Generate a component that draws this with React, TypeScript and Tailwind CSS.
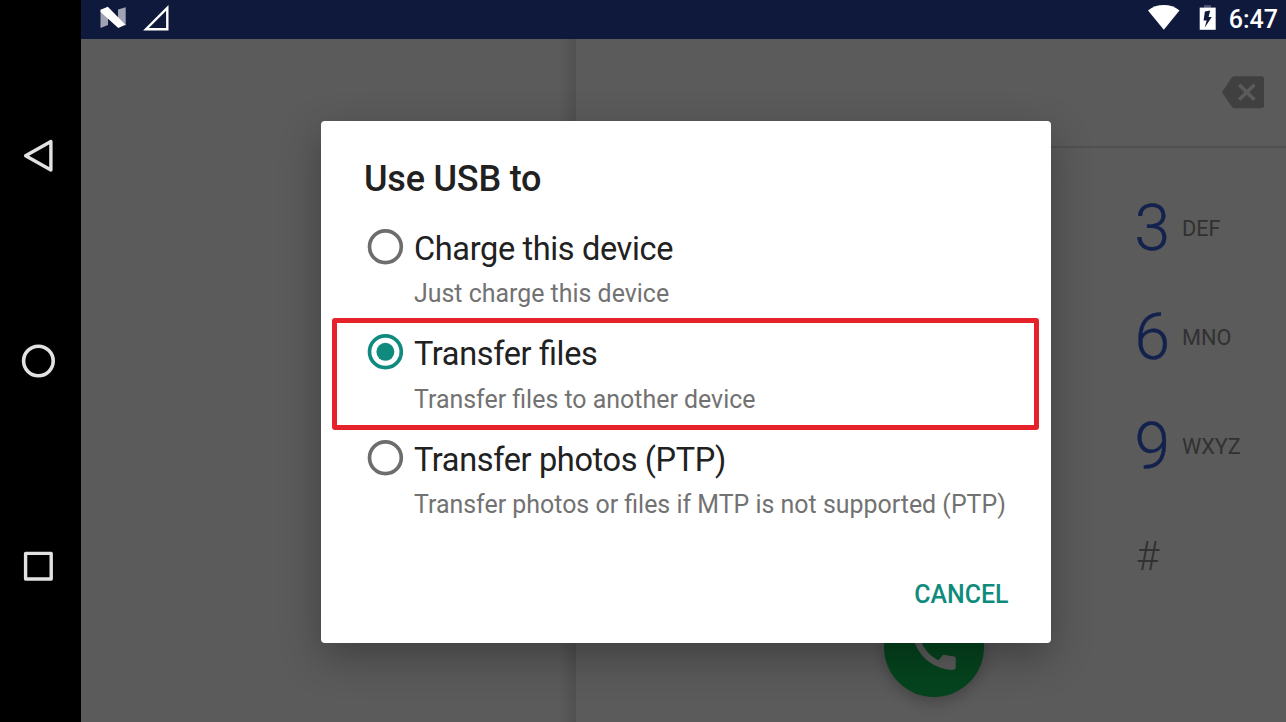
import React from "react";

const options = [
  { title: "Charge this device", detail: "Just charge this device", checked: false },
  { title: "Transfer files", detail: "Transfer files to another device", checked: true },
  {
    title: "Transfer photos (PTP)",
    detail: "Transfer photos or files if MTP is not supported (PTP)",
    checked: false,
  },
];

const keys = [
  { digit: "3", letters: "DEF" },
  { digit: "6", letters: "MNO" },
  { digit: "9", letters: "WXYZ" },
];

function NavigationBar() {
  return (
    <nav className="flex w-[81px] shrink-0 flex-col justify-center bg-black pr-[5px]">
      <button className="flex h-[205px] items-center justify-center" aria-label="Back">
        <svg width="40" height="40" viewBox="0 0 40 40" fill="none" stroke="#e2e2e2" strokeWidth="3.4" strokeLinejoin="round">
          <path d="M32.9 5.5V34L7.6 19.8Z" />
        </svg>
      </button>
      <button className="flex h-[205px] items-center justify-center" aria-label="Home">
        <svg width="40" height="40" viewBox="0 0 40 40" fill="none" stroke="#e2e2e2" strokeWidth="3.6">
          <circle cx="20.4" cy="20" r="14.8" />
        </svg>
      </button>
      <button className="flex h-[205px] items-center justify-center" aria-label="Recents">
        <svg width="40" height="40" viewBox="0 0 40 40" fill="none" stroke="#e2e2e2" strokeWidth="3.4" strokeLinejoin="round">
          <rect x="7.6" y="7.4" width="25.6" height="25.6" />
        </svg>
      </button>
    </nav>
  );
}

function StatusBar() {
  return (
    <header className="flex h-[39px] shrink-0 items-center justify-between bg-[#0e193c] pl-[18px] pr-[8px] text-white">
      <div className="flex h-full items-center">
        <svg width="80" height="39" viewBox="99 0 80 39">
          <path d="M100.5 9.5 108 12V25L100.5 28Z M118 9.5 125.7 7.3V25.5L118 23Z" fill="#9fa3b4" />
          <path d="M100.6 9.7 107.8 6.8 125.5 24.8 118.3 28 100.6 12Z" fill="#fff" />
          <path d="M167.3 8V29.2H146Z" fill="none" stroke="#fff" strokeWidth="2.4" />
        </svg>
      </div>
      <div className="flex h-full items-center">
        <svg width="82" height="39" viewBox="1147 0 82 39">
          <path d="M1163.8 29.8 1148 10.4C1152.5 6.8 1158 5 1163.8 5S1175 6.8 1179.5 10.4Z" fill="#fff" />
          <path d="M1204 5H1211V8H1204Z" fill="#4a5270" />
          <path d="M1199.7 7.6H1215.7V29.8H1199.7Z" fill="#fff" />
          <path d="M1210.2 10.5 1204.9 11.5 1203.6 20.5H1206.6L1204.8 27.5 1211.8 17H1208.6Z" fill="#0e193c" />
        </svg>
        <span className="text-[25px] font-medium leading-[39px]">6:47</span>
      </div>
    </header>
  );
}

function Dialer() {
  return (
    <main className="flex min-h-0 flex-1 bg-[#5b5b5b]">
      <section className="flex w-[495px] justify-end">
        <div className="w-[17px] bg-linear-to-r from-[#5b5b5b] to-[#505050]" />
      </section>
      <section className="relative flex flex-1 flex-col">
        <div className="flex h-[109px] items-center justify-end border-b-2 border-[#515151] pr-[22px]">
          <svg width="42.5" height="42.5" viewBox="0 0 24 24" fill="#404040">
            <path d="M22 3H7c-.69 0-1.23.35-1.59.88L0 12l5.41 8.11c.36.53.9.89 1.59.89h15c1.1 0 2-.9 2-2V5c0-1.1-.9-2-2-2zm-3 12.59L17.59 17 14 13.41 10.41 17 9 15.59 12.59 12 9 8.41 10.41 7 14 10.59 17.59 7 19 8.41 15.41 12 19 15.59z" />
          </svg>
        </div>
        <div className="flex flex-col pl-[558.5px] pt-[26px]">
          {keys.map((key) => (
            <div key={key.digit} className="flex h-[109.3px] items-center">
              <span className="w-[47.5px] text-[64px] font-light leading-none text-[#13214d] [-webkit-text-stroke:0.4px_#13214d]">
                {key.digit}
              </span>
              <span className="text-[21.7px] leading-none text-[#313131]">{key.letters}</span>
            </div>
          ))}
          <div className="flex h-[110px] items-center pl-[1.5px]">
            <span className="text-[40px] font-light leading-none text-[#313131]">#</span>
          </div>
        </div>
        <button
          className="absolute left-[308px] top-[558px] flex size-[100px] items-center justify-center rounded-full bg-[#05441e] shadow-[0_6px_14px_rgba(0,0,0,0.22)]"
          aria-label="Call"
        >
          <svg className="mt-px" width="58" height="58" viewBox="0 0 24 24" fill="#5b5b5b">
            <path d="M20.01 15.38c-1.23 0-2.42-.2-3.53-.56a.977.977 0 0 0-1.01.24l-1.57 1.97c-2.83-1.35-5.48-3.9-6.89-6.83l1.95-1.66c.27-.28.35-.67.24-1.02-.37-1.11-.56-2.3-.56-3.53 0-.54-.45-.99-.99-.99H4.19C3.65 3 3 3.24 3 3.99 3 13.28 10.73 21 20.01 21c.71 0 .99-.63.99-1.18v-3.45c0-.54-.45-.99-.99-.99z" />
          </svg>
        </button>
      </section>
    </main>
  );
}

function Radio({ checked }: { checked: boolean }) {
  return (
    <svg className={checked ? "shrink-0 text-[#0f8b7e]" : "shrink-0 text-[#6d6d6d]"} width="39" height="39" viewBox="0 0 39 39">
      <circle cx="19.4" cy="19.8" r="15.9" fill="none" stroke="currentColor" strokeWidth="3.7" />
      {checked && <circle cx="19.4" cy="19.8" r="9" fill="currentColor" />}
    </svg>
  );
}

function UsbDialog() {
  return (
    <div
      role="dialog"
      className="absolute left-[321px] top-[121px] flex h-[522px] w-[730px] flex-col rounded-[4px] bg-white shadow-[0_14px_40px_rgba(0,0,0,0.3)]"
    >
      <h1 className="pl-[43px] pt-[37px] text-[36px] font-medium leading-[42px] tracking-[-0.2px] text-[#212121]">
        Use USB to
      </h1>
      <div className="mt-[21px] flex flex-col">
        {options.map((option) => (
          <div key={option.title} className="flex h-[105.4px] pl-[45px]">
            <div className="pt-[6px]">
              <Radio checked={option.checked} />
            </div>
            <div className="flex flex-col whitespace-nowrap pl-[9px] pt-[9px]">
              <span className="text-[32.5px] leading-[38px] tracking-[-0.36px] text-[#212121] [font-feature-settings:'liga'_1]">
                {option.title}
              </span>
              <span className="mt-[11.3px] text-[24.93px] leading-[30px] text-[#727272]">{option.detail}</span>
            </div>
          </div>
        ))}
      </div>
      <div className="mt-auto flex justify-end pb-[33px] pr-[42.5px]">
        <button className="text-[24.9px] font-medium leading-[30px] text-[#0f8b7e]">CANCEL</button>
      </div>
      <div className="pointer-events-none absolute left-[11px] top-[197px] h-[112px] w-[707px] rounded-[3px] border-[5.5px] border-[#e52129]" />
    </div>
  );
}

export default function App() {
  return (
    <div className="relative flex h-[722px] w-[1286px] overflow-hidden font-['Roboto',sans-serif]">
      <NavigationBar />
      <div className="flex flex-1 flex-col">
        <StatusBar />
        <Dialer />
      </div>
      <UsbDialog />
    </div>
  );
}
